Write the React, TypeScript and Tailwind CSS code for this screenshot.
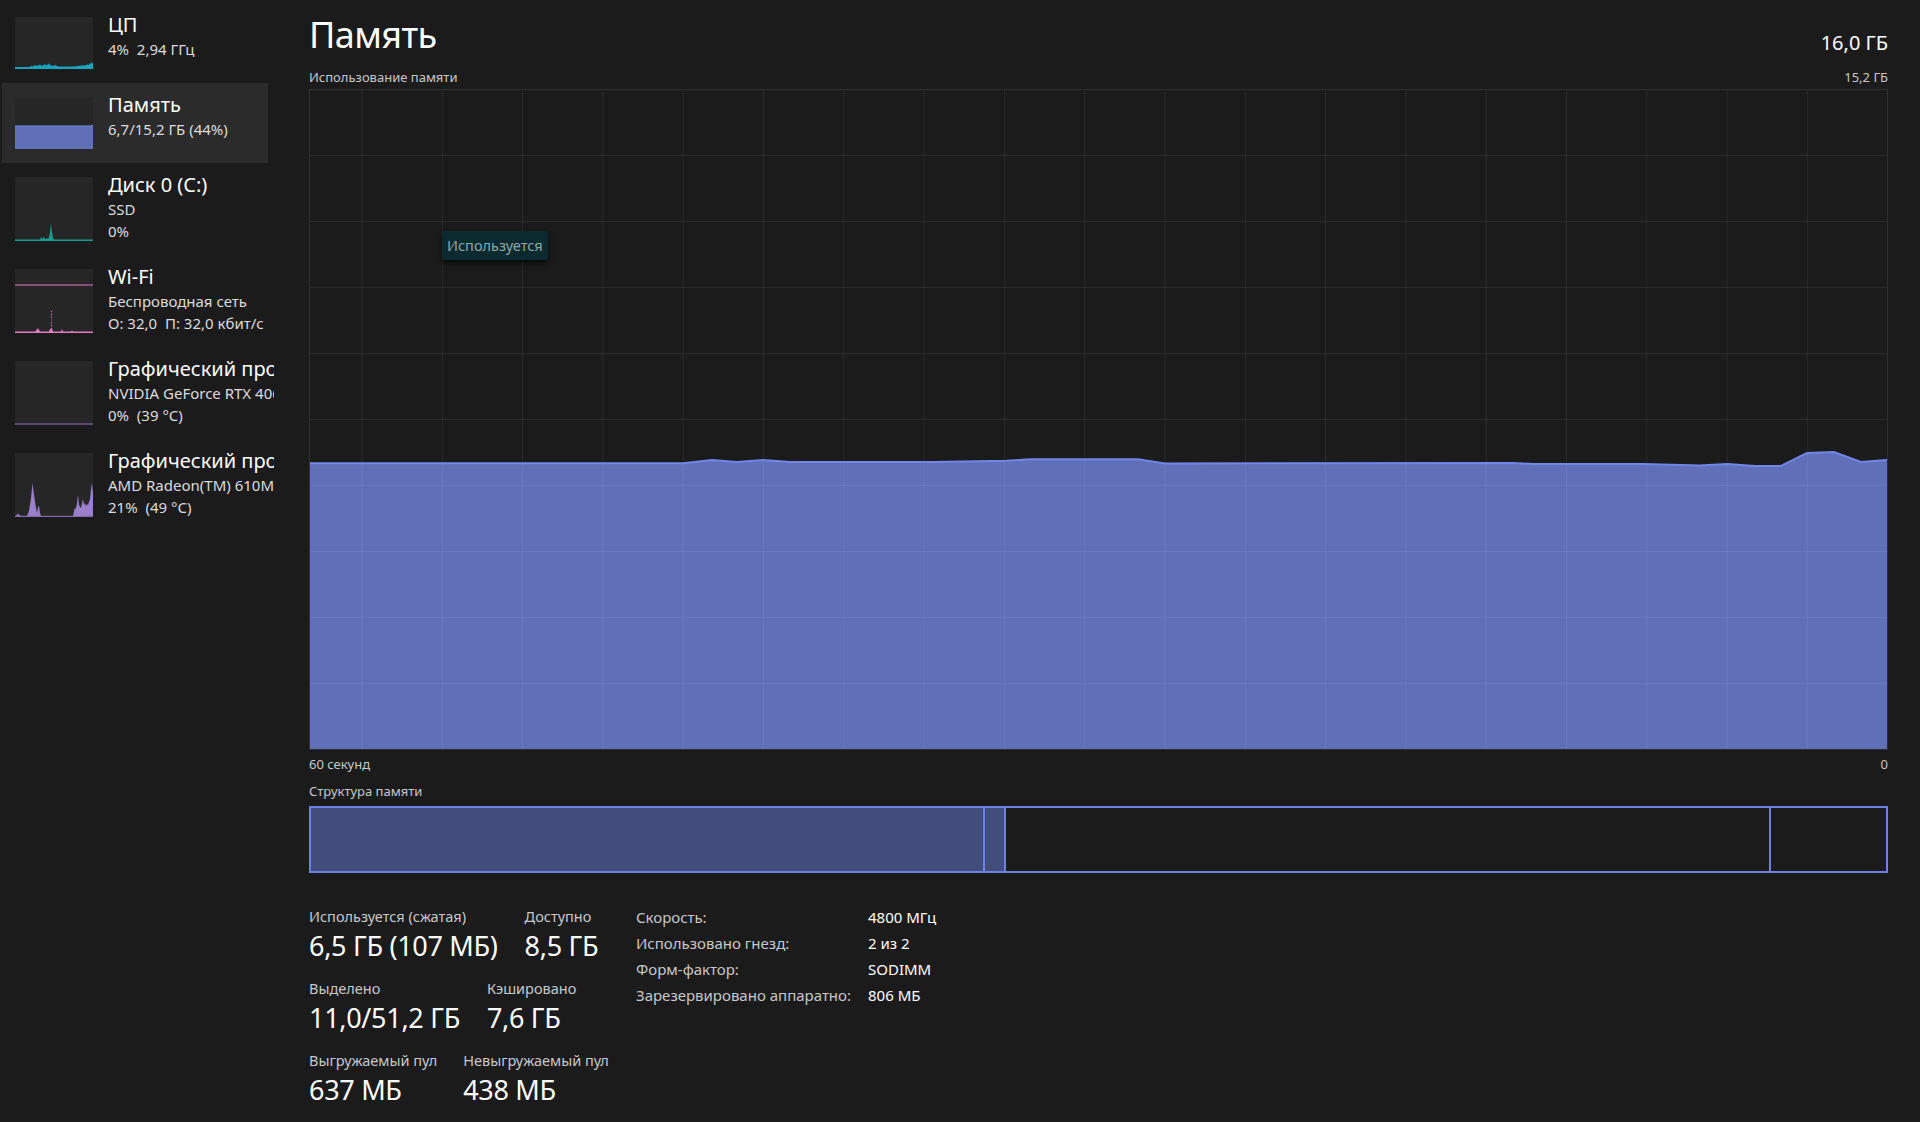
import React from 'react'

const font = { fontFamily: '"Noto Sans", "Open Sans", sans-serif' }

// chart data, px inside the 1579x661 chart box
const usage: [number, number][] = [
  [0, 374.3], [374, 374.3], [403, 371], [428, 373], [454, 371], [481, 373], [623, 373],
  [698, 371.7], [721, 370.3], [829, 370.3], [856, 374.5], [1204, 374], [1224, 375],
  [1334, 375], [1391, 376.5], [1418, 375], [1446, 377], [1472, 377], [1498, 364],
  [1525, 363], [1552, 373], [1578, 371],
]

function CpuThumb() {
  return (
    <svg viewBox="0 0 78 52" preserveAspectRatio="none" className="w-full h-full">
      <path
        d="M0 52 L0 50 L14 50 L16 49 L18 49.5 L20 48 L22 49 L25 47.5 L27 49 L30 47 L31 48.5 L34 46.5 L35 48 L38 49 L40 48 L43 49.5 L60 49.5 L63 49 L66 48.5 L70 48.6 L72 47.5 L74 48 L75 46 L76 47 L77 45.5 L78 46 L78 52 Z"
        fill="#1aa3bf"
      />
    </svg>
  )
}

function MemThumb() {
  return (
    <svg viewBox="0 0 78 52" preserveAspectRatio="none" className="w-full h-full">
      <path d="M0 52 L0 29 L76 29 L77 28 L78 29 L78 52 Z" fill="#5f6fb8" />
      <path d="M0 29 L76 29 L77 28 L78 29" stroke="#7286e6" strokeWidth="1" fill="none" />
    </svg>
  )
}

function DiskThumb() {
  return (
    <svg viewBox="0 0 78 64" preserveAspectRatio="none" className="w-full h-full">
      <path
        d="M0 64 L0 62.5 L25 62.5 L26 60 L27 62 L29 60 L30 62 L34 61 L35 55 L36 47 L37 55 L38 61 L39 62.5 L78 62.5 L78 64 Z"
        fill="#169e8e"
      />
    </svg>
  )
}

function WifiThumb() {
  return (
    <svg viewBox="0 0 78 64" preserveAspectRatio="none" className="w-full h-full">
      <line x1="0" y1="16" x2="78" y2="16" stroke="#e07ac2" strokeWidth="1" />
      <path
        d="M0 64 L0 62.5 L20 62.5 L22 60.5 L23 59 L24 61 L25 62.5 L34 62.5 L35 60 L37 60 L38 62.5 L46 62.5 L47 60 L48 62.5 L56 62.5 L57 61.5 L58 62.5 L78 62.5 L78 64 Z"
        fill="#e07ac2"
      />
      <line x1="36.5" y1="42" x2="36.5" y2="60" stroke="#e07ac2" strokeWidth="1.2" strokeDasharray="1.2 1.6" />
    </svg>
  )
}

function GpuThumb() {
  return (
    <svg viewBox="0 0 78 64" preserveAspectRatio="none" className="w-full h-full">
      <line x1="0" y1="63" x2="78" y2="63" stroke="#6d5a8e" strokeWidth="1.5" />
    </svg>
  )
}

function Gpu2Thumb() {
  return (
    <svg viewBox="0 0 78 64" preserveAspectRatio="none" className="w-full h-full">
      <path
        d="M0 64 L0 63 L2 62 L3 60 L4 62 L6 63 L12 63 L14 58 L16 45 L17.5 30 L19 42 L21 55 L22 60 L23 54 L24 53 L25 60 L26 63 L58 63 L59 58 L60 55 L61 56 L62 50 L63 42 L64 52 L65 54 L66 55 L67 50 L68 46 L69 52 L70 50 L71 53 L72 51 L73 52 L74 49 L75 46 L76 36 L77 30 L78 40 L78 64 Z"
        fill="#9a7fcc"
      />
      <line x1="0" y1="63.3" x2="78" y2="63.3" stroke="#7f6aa8" strokeWidth="1" />
    </svg>
  )
}

type Item = { title: string; lines: string[]; tall: boolean; thumb: React.ReactNode; active?: boolean }

const items: Item[] = [
  { title: 'ЦП', lines: ['4%  2,94 ГГц'], tall: false, thumb: <CpuThumb /> },
  { title: 'Память', lines: ['6,7/15,2 ГБ (44%)'], tall: false, thumb: <MemThumb />, active: true },
  { title: 'Диск 0 (C:)', lines: ['SSD', '0%'], tall: true, thumb: <DiskThumb /> },
  { title: 'Wi-Fi', lines: ['Беспроводная сеть', 'О: 32,0  П: 32,0 кбит/с'], tall: true, thumb: <WifiThumb /> },
  { title: 'Графический процессор 0', lines: ['NVIDIA GeForce RTX 4060 Laptop GPU', '0%  (39 °C)'], tall: true, thumb: <GpuThumb /> },
  { title: 'Графический процессор 1', lines: ['AMD Radeon(TM) 610M', '21%  (49 °C)'], tall: true, thumb: <Gpu2Thumb /> },
]

function SideRow({ item }: { item: Item }) {
  return (
    <div
      className={`flex items-center gap-[15px] pl-[13px] ml-[2px] w-[300px] ${item.tall ? 'h-[92px]' : 'h-[80px]'}`}
    >
      <div className={`shrink-0 w-[78px] bg-[#262626] ${item.tall ? 'h-[64px]' : 'h-[52px]'}`}>
        {item.thumb}
      </div>
      <div className="self-start pt-[9px] whitespace-nowrap">
        <p className="text-[20px] leading-[26px] text-white">{item.title}</p>
        {item.lines.map((l) => (
          <p key={l} className="text-[15px] leading-[22px] text-[#dcdcdc] whitespace-pre">
            {l}
          </p>
        ))}
      </div>
    </div>
  )
}

function Sidebar() {
  return (
    <div className="w-[274px] shrink-0 overflow-hidden pt-[3px]">
      {items.map((it) => (
        <div key={it.title} className="relative">
          {it.active && <div className="absolute left-[2px] top-0 bottom-0 w-[266px] bg-[#2b2b2b]" />}
          <div className="relative">
            <SideRow item={it} />
          </div>
        </div>
      ))}
    </div>
  )
}

function UsageChart() {
  const W = 1579
  const H = 661
  const line = usage.map(([x, y], i) => `${i ? 'L' : 'M'}${x} ${y}`).join(' ')
  const area = `${line} L${W - 1} ${H - 1} L1 ${H - 1} Z`
  const vlines: number[] = []
  for (let x = 53; x < W - 2; x += 80.3) vlines.push(x)
  const hlines: number[] = []
  for (let k = 1; k < 10; k++) hlines.push(k * 66)

  return (
    <div className="relative h-[661px]">
      <svg viewBox={`0 0 ${W} ${H}`} preserveAspectRatio="none" className="block w-full h-full">
        <path d={area} fill="#5f6fb8" />
        {vlines.map((x) => (
          <line key={x} x1={x} y1="0" x2={x} y2={H} stroke="rgba(255,255,255,0.065)" strokeWidth="1" />
        ))}
        {hlines.map((y) => (
          <line key={y} x1="0" y1={y + 0.5} x2={W} y2={y + 0.5} stroke="rgba(255,255,255,0.065)" strokeWidth="1" />
        ))}
        <path d={line} fill="none" stroke="#7186e8" strokeWidth="2" />
        <rect x="0.5" y="0.5" width={W - 1} height={H - 1} fill="none" stroke="#303030" strokeWidth="1" />
      </svg>
      <div className="absolute left-[133px] top-[142px] h-[29px] px-[5px] flex items-center rounded-[3px] bg-[#0b2a30] shadow-md shadow-black/60">
        <span className="text-[14.5px] text-[#8ea7aa]">Используется</span>
      </div>
    </div>
  )
}

function Structure() {
  return (
    <div className="flex h-[67px] border-2 border-[#6d80e3]">
      <div className="w-[674px] h-full bg-[#434d7b] border-r-2 border-[#6d80e3]" />
      <div className="w-[21px] h-full bg-[#434d7b] border-r-2 border-[#6d80e3]" />
      <div className="w-[765px] h-full border-r-2 border-[#6d80e3]" />
      <div className="flex-1" />
    </div>
  )
}

function Stat({ label, value }: { label: string; value: string }) {
  return (
    <div className="flex flex-col">
      <span className="text-[14.5px] leading-[20px] text-[#c8c8c8] whitespace-nowrap">{label}</span>
      <span className="mt-[2px] text-[27px] leading-[36px] tracking-[-0.3px] text-white whitespace-nowrap">
        {value}
      </span>
    </div>
  )
}

const info: [string, string][] = [
  ['Скорость:', '4800 МГц'],
  ['Использовано гнезд:', '2 из 2'],
  ['Форм-фактор:', 'SODIMM'],
  ['Зарезервировано аппаратно:', '806 МБ'],
]

export default function App() {
  return (
    <div className="flex w-[1920px] h-[1122px] bg-[#1b1b1b] text-white overflow-hidden" style={font}>
      <Sidebar />

      <div className="flex-1 min-w-0 pl-[35px] pr-[32px] pt-[13px]">
        {/* Header */}
        <div className="flex items-baseline justify-between">
          <h1 className="text-[36px] leading-[44px] tracking-[-0.6px] font-normal">Память</h1>
          <span className="relative top-[2px] text-[20px] leading-[28px]">16,0 ГБ</span>
        </div>
        <div className="mt-[12px] mb-[4px] flex justify-between text-[13px] leading-[16px] text-[#c8c8c8]">
          <span>Использование памяти</span>
          <span>15,2 ГБ</span>
        </div>

        <UsageChart />

        <div className="mt-[6px] flex justify-between text-[13px] leading-[16px] text-[#c8c8c8]">
          <span>60 секунд</span>
          <span>0</span>
        </div>
        <div className="mt-[11px] mb-[7px] text-[13px] leading-[16px] text-[#c8c8c8]">Структура памяти</div>

        <Structure />

        {/* Stats */}
        <div className="mt-[33px] flex items-start">
          <div className="w-[327px] shrink-0 flex flex-col gap-[14px]">
            <div className="flex gap-[27px]">
              <Stat label="Используется (сжатая)" value="6,5 ГБ (107 МБ)" />
              <Stat label="Доступно" value="8,5 ГБ" />
            </div>
            <div className="flex gap-[27px]">
              <Stat label="Выделено" value="11,0/51,2 ГБ" />
              <Stat label="Кэшировано" value="7,6 ГБ" />
            </div>
            <div className="flex gap-[26px]">
              <Stat label="Выгружаемый пул" value="637 МБ" />
              <Stat label="Невыгружаемый пул" value="438 МБ" />
            </div>
          </div>
          <div className="-mt-[2px] grid grid-cols-[232px_auto] content-start text-[15px] leading-[26px]">
            {info.map(([k, v]) => (
              <React.Fragment key={k}>
                <span className="text-[#c8c8c8] whitespace-nowrap">{k}</span>
                <span className="text-white whitespace-nowrap">{v}</span>
              </React.Fragment>
            ))}
          </div>
        </div>
      </div>
    </div>
  )
}
